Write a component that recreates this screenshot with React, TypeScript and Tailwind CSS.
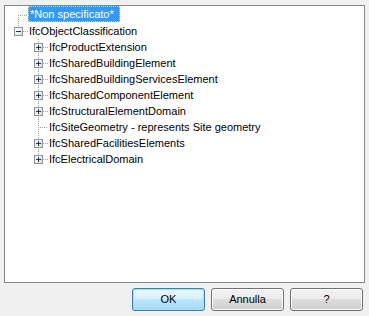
import React from "react";

const DOT = "#a0a0a0";

function VLine({ x, y1, y2 }: { x: number; y1: number; y2: number }) {
  const rects = [];
  for (let y = y1; y < y2; y += 2) rects.push(<rect key={y} x={x} y={y} width={1} height={1} fill={DOT} />);
  return <>{rects}</>;
}
function HLine({ y, x1, x2 }: { y: number; x1: number; x2: number }) {
  const rects = [];
  for (let x = x1; x < x2; x += 2) rects.push(<rect key={x} x={x} y={y} width={1} height={1} fill={DOT} />);
  return <>{rects}</>;
}

function Box({ x, y, plus }: { x: number; y: number; plus: boolean }) {
  return (
    <>
      <rect x={x + 0.5} y={y + 0.5} width={8} height={8} fill="#ffffff" stroke="#919191" />
      <rect x={x + 1} y={y + 1} width={7} height={7} fill="url(#bx)" />
      <rect x={x + 2} y={y + 4} width={5} height={1} fill="#1e395b" />
      {plus && <rect x={x + 4} y={y + 2} width={1} height={5} fill="#1e395b" />}
    </>
  );
}

const children: { label: string; exp: boolean }[] = [
  { label: "IfcProductExtension", exp: true },
  { label: "IfcSharedBuildingElement", exp: true },
  { label: "IfcSharedBuildingServicesElement", exp: true },
  { label: "IfcSharedComponentElement", exp: true },
  { label: "IfcStructuralElementDomain", exp: true },
  { label: "IfcSiteGeometry - represents Site geometry", exp: false },
  { label: "IfcSharedFacilitiesElements", exp: true },
  { label: "IfcElectricalDomain", exp: true },
];

const font = { fontFamily: '"Liberation Sans", Arial, sans-serif' };

function Defs() {
  return (
    <defs>
      <linearGradient id="bx" x1="0" y1="0" x2="1" y2="1">
        <stop offset="0" stopColor="#ffffff" />
        <stop offset="1" stopColor="#dcdcdc" />
      </linearGradient>
    </defs>
  );
}

export default function App() {
  return (
    <div className="w-[369px] h-[316px] bg-[#f0f0f0] flex flex-col text-[11px] text-black" style={font}>
      <div className="ml-[4px] mt-[5px] w-[361px] h-[278px] border border-[#828790] bg-white flex flex-col pt-[1px]">
        {/* row 0 */}
        <div className="h-[16px] flex items-stretch relative">
          <svg width={23} height={16} className="shrink-0">
            <HLine y={8} x1={13} x2={23} />
            <VLine x={13} y1={8} y2={16} />
          </svg>
          <div className="h-[16px] -mt-[1px] w-[92px] bg-[#3399ff] border border-dotted border-[#ffd27a] text-white flex items-center pl-[1px] leading-none">
            *Non specificato*
          </div>
        </div>
        {/* row 1 */}
        <div className="h-[16px] flex items-stretch">
          <svg width={23} height={16} className="shrink-0">
            <Defs />
            <VLine x={13} y1={0} y2={4} />
            <Box x={9} y={4} plus={false} />
            <HLine y={8} x1={18} x2={23} />
            <VLine x={33} y1={14} y2={16} />
          </svg>
          <span className="ml-[1px] flex items-center leading-none">IfcObjectClassification</span>
        </div>
        {children.map((c, i) => {
          const last = i === children.length - 1;
          return (
            <div key={c.label} className="h-[16px] flex items-stretch">
              <svg width={43} height={16} className="shrink-0">
                <Defs />
                {c.exp ? (
                  <>
                    <VLine x={33} y1={0} y2={4} />
                    <Box x={29} y={4} plus={true} />
                    {!last && <VLine x={33} y1={14} y2={16} />}
                    <HLine y={8} x1={38} x2={43} />
                  </>
                ) : (
                  <>
                    <VLine x={33} y1={0} y2={16} />
                    <HLine y={8} x1={35} x2={43} />
                  </>
                )}
              </svg>
              <span className="ml-[1px] flex items-center leading-none whitespace-nowrap">{c.label}</span>
            </div>
          );
        })}
      </div>
      <div className="flex justify-end gap-[6px] mt-[5px] mr-[6px]">
        <button className="w-[73px] h-[23px] rounded-[3px] border border-[#3c7fb1] bg-[linear-gradient(180deg,#eaf6fd_0%,#d9f0fc_50%,#bee6fd_50%,#a7d9f5_100%)] shadow-[inset_0_0_0_1px_#98e5f9] flex items-center justify-center leading-none">
          OK
        </button>
        <button className="w-[73px] h-[23px] rounded-[3px] border border-[#707070] bg-[linear-gradient(180deg,#f2f2f2_0%,#ebebeb_50%,#dddddd_50%,#cfcfcf_100%)] shadow-[inset_0_0_0_1px_#fcfcfc] flex items-center justify-center leading-none">
          Annulla
        </button>
        <button className="w-[73px] h-[23px] rounded-[3px] border border-[#707070] bg-[linear-gradient(180deg,#f2f2f2_0%,#ebebeb_50%,#dddddd_50%,#cfcfcf_100%)] shadow-[inset_0_0_0_1px_#fcfcfc] flex items-center justify-center leading-none">
          ?
        </button>
      </div>
    </div>
  );
}
